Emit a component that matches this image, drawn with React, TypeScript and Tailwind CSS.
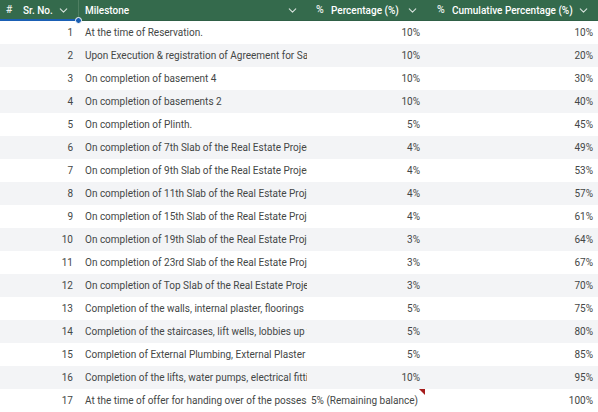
import { ChevronDown } from "lucide-react";

const rows: [string, string, string][] = [
  ["At the time of Reservation.", "10%", "10%"],
  ["Upon Execution & registration of Agreement for Sale", "10%", "20%"],
  ["On completion of basement 4", "10%", "30%"],
  ["On completion of basements 2", "10%", "40%"],
  ["On completion of Plinth.", "5%", "45%"],
  ["On completion of 7th Slab of the Real Estate Project", "4%", "49%"],
  ["On completion of 9th Slab of the Real Estate Project", "4%", "53%"],
  ["On completion of 11th Slab of the Real Estate Project", "4%", "57%"],
  ["On completion of 15th Slab of the Real Estate Project", "4%", "61%"],
  ["On completion of 19th Slab of the Real Estate Project", "3%", "64%"],
  ["On completion of 23rd Slab of the Real Estate Project", "3%", "67%"],
  ["On completion of Top Slab of the Real Estate Project", "3%", "70%"],
  ["Completion of the walls, internal plaster, floorings", "5%", "75%"],
  ["Completion of the staircases, lift wells, lobbies up to", "5%", "80%"],
  ["Completion of External Plumbing, External Plaster", "5%", "85%"],
  ["Completion of the lifts, water pumps, electrical fittings", "10%", "95%"],
  ["At the time of offer for handing over of the possession", "5% (Remaining balance)", "100%"],
];

const cols = "grid grid-cols-[78px_229px_120px_171px]";

function HeaderCell({ icon, label, pad }: { icon: string; label: string; pad: string }) {
  return (
    <div className={`flex items-center h-full pr-[8px] ${pad}`}>
      <span className="w-[15px] text-[10.5px] text-white/90">{icon}</span>
      <span className="flex-1 truncate">{label}</span>
      <ChevronDown size={13} strokeWidth={2} className="text-white/80" />
    </div>
  );
}

const App = () => {
  return (
    <div className="w-[598px] h-[412px] overflow-hidden bg-white text-[10px] text-[#444746] font-['Roboto',sans-serif]">
      <div className={`${cols} relative h-[21px] bg-[#346a4c] text-white font-medium text-[10px] border-b border-[#2f6046]`}>
        <div className="flex items-center h-full pl-[6px] pr-[8px]">
          <span className="w-[17px] text-[10.5px] text-white/90">#</span>
          <span className="flex-1">Sr. No.</span>
          <ChevronDown size={13} strokeWidth={2} className="text-white/80" />
        </div>
        <div className="flex items-center h-full pl-[6px] pr-[8px] border-l border-[#4f7f62]">
          <span className="flex-1">Milestone</span>
          <ChevronDown size={13} strokeWidth={2} className="text-white/80" />
        </div>
        <HeaderCell icon="%" label="Percentage (%)" pad="pl-[9px]" />
        <HeaderCell icon="%" label="Cumulative Percentage (%)" pad="pl-[10px]" />
        <div className="absolute left-0 bottom-[-1px] w-[78px] h-[2px] bg-[#1a5fb4]" />
        <div className="absolute left-[75px] bottom-[-4px] w-[7px] h-[7px] rounded-full bg-[#1a5fb4] border border-white" />
      </div>
      {rows.map(([m, p, c], i) => (
        <div key={i} className={`${cols} h-[23px] items-center ${i % 2 === 1 ? "bg-[#f3f4f6]" : "bg-white"}`}>
          <div className="text-right pr-[5px]">{i + 1}</div>
          <div className="pl-[7px] pr-[3px] whitespace-nowrap overflow-hidden">{m}</div>
          <div className={`relative h-full flex items-center ${p.length > 4 ? "justify-start pl-[4px]" : "justify-end pr-[7px]"}`}>
            {p}
            {i === 16 && (
              <div className="absolute top-0 right-[2px] w-0 h-0 border-t-[6px] border-l-[6px] border-t-[#a61c1c] border-l-transparent" />
            )}
          </div>
          <div className="text-right pr-[5px]">{c}</div>
        </div>
      ))}
    </div>
  );
};

export default App;
